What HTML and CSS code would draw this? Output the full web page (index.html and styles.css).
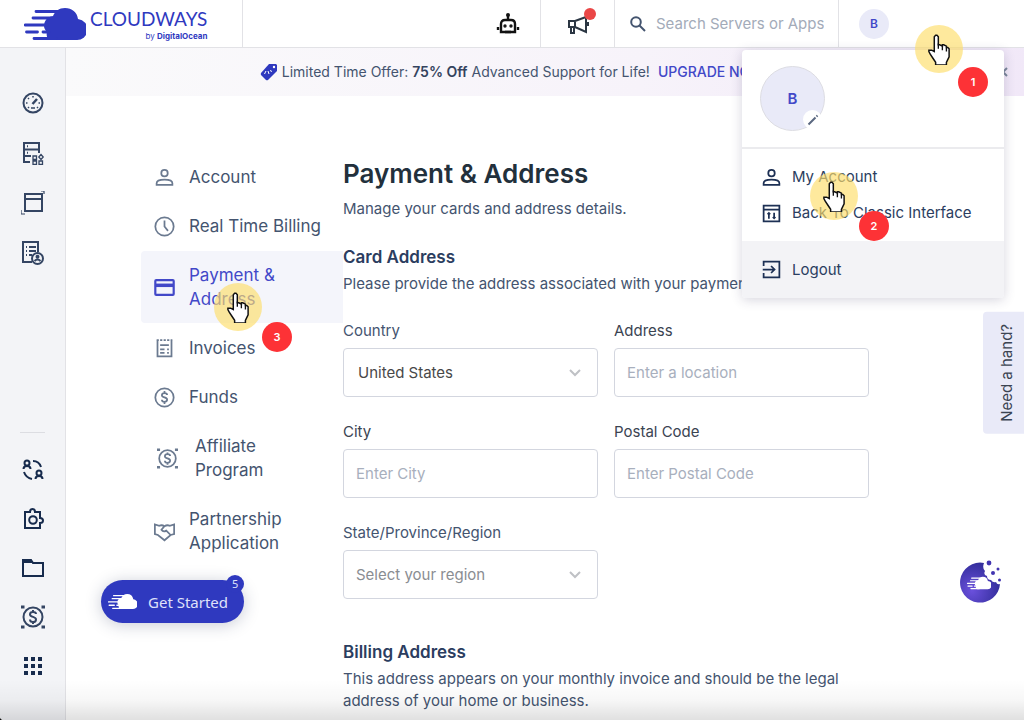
FILE: index.html
```html
<!DOCTYPE html>
<html lang="en">
<head>
  <meta charset="utf-8">
  <title>Payment &amp; Address</title>
  <link rel="stylesheet" href="styles.css">
</head>
<body>
  <!-- shared shapes -->
  <svg class="defs" aria-hidden="true">
    <symbol id="cloud" viewBox="0 0 62 34">
      <path d="M27 33h25a10 10 0 0 0 2-21C53 5 48 1 41 1c-6 0-10 3-12 8-6 1-9 5-9 10 0 2 1 4 3 6-1 3 0 8 4 8z" fill="currentColor"/>
      <path d="M12 4.500h22M9 11h18M1 18h22M2.500 25h11M19 25h6M10 31.500h22" fill="none" stroke="currentColor" stroke-width="2.800" stroke-linecap="round"/>
    </symbol>
    <symbol id="hand" viewBox="0 0 17 23">
      <path d="M5 13V2l1-1h1l1 1v6h1l2 1v-1h1l2 1v1h1l1 1v6l-1 2-1 2v2H6v-2l-2-3-2-3-1-2v-1h2z" fill="#fff" stroke="#111" stroke-width="1.1"/>
      <path d="M8 7v4M11 9v3M14 10v3" fill="none" stroke="#111"/>
    </symbol>
    <symbol id="user" viewBox="0 0 24 24">
      <circle cx="12" cy="7" r="3.700"/>
      <path d="M3 20.500v-2c0-2.500 4-4 9-4s9 1.500 9 4v2z"/>
    </symbol>
    <symbol id="affiliate" viewBox="0 0 24 24">
      <circle cx="12" cy="12" r="9.500"/>
      <path d="M15 9c0-1.500-1.500-2-3-2s-3 .7-3 2.400c0 3.200 6 1.800 6 5 0 1.800-1.500 2.600-3 2.600s-3-.8-3-2.500M12 5v2M12 17v2"/>
      <path d="M0 2h3.500M20.500 2H24M20.500 22H24M0 22h3.500" stroke-width="3"/>
    </symbol>
  </svg>

  <div class="app">
    <header class="topbar">
      <a class="logo" href="#">
        <svg class="logo-cloud"><use href="#cloud"/></svg>
        <span class="logo-text">
          <span class="logo-name">CLOUDWAYS</span>
          <span class="logo-by">by <b>DigitalOcean</b></span>
        </span>
      </a>
      <button class="top-button robot" aria-label="Assistant">
        <svg class="icon" viewBox="0 0 24 24">
          <path d="M12 3v5M5 20v-8q0-4 4-4h6q4 0 4 4v8z" stroke-width="2.400"/>
          <path d="M2 15v3M22 15v3M9 20h6" stroke-width="2.400"/>
          <circle cx="12" cy="3" r="1" fill="currentColor"/>
          <circle cx="9" cy="14" r=".7" fill="currentColor"/>
          <circle cx="15" cy="14" r=".7" fill="currentColor"/>
        </svg>
      </button>
      <button class="top-button news" aria-label="News">
        <svg class="icon" viewBox="0 0 24 24">
          <path d="M3 9v6h6V9zM9 9l11-4v15L9 15M5 15v6h3v-6M22 10v4"/>
        </svg>
        <span class="news-dot"></span>
      </button>
      <label class="search">
        <svg class="search-icon" viewBox="0 0 18 18">
          <circle cx="7" cy="7" r="4.800"/>
          <path d="M10.500 10.500L16 16"/>
        </svg>
        <input type="search" placeholder="Search Servers or Apps" aria-label="Search Servers or Apps">
      </label>
      <div class="profile">
        <button class="avatar">B</button>
      </div>
    </header>

    <div class="body">
      <nav class="sidebar" aria-label="Main">
        <a href="#" aria-label="Dashboard">
          <svg class="icon" viewBox="0 0 24 24">
            <circle cx="12" cy="12" r="9.500"/>
            <path d="M11.500 13L16 8" stroke-width="2.500"/>
            <path d="M12 5v1.500M7 7l1 1M5 12h1.500M7 17l1-1M17.500 12H19M16 16l1 1M10 17h4" stroke-width="1.500"/>
          </svg>
        </a>
        <a href="#" aria-label="Servers">
          <svg class="icon" viewBox="0 0 24 24">
            <path d="M9 21H3V2h15v10M3 8.500h15M3 15h7M6 5.200h1M6 11.700h1"/>
            <path d="M12 15h3.500v3.500H12zM12 20h3.500v3.500H12zM18 20h3.500v3.500H18zM20 13.500l2.200 2.500-2.200 2.500-2.200-2.500z" stroke-width="1.300"/>
          </svg>
        </a>
        <a href="#" aria-label="Applications">
          <svg class="icon" viewBox="0 0 24 24">
            <path d="M4 3h17v17H4zM4 8h17"/>
            <path d="M0 19v4h4M20 0h3v3" stroke-width="1.200"/>
          </svg>
        </a>
        <a href="#" aria-label="Projects">
          <svg class="icon" viewBox="0 0 24 24">
            <path d="M11 21H2V1h15v10M5 6h1M8 6h7M5 10h1M8 10h7M5 14h1M8 14h3"/>
            <circle cx="16.500" cy="17.500" r="5.500"/>
            <circle cx="16.500" cy="15.800" r="1"/>
            <path d="M13.500 20q3-3 6 0"/>
          </svg>
        </a>
        <hr>
        <a class="dark" href="#" aria-label="Team">
          <svg class="icon" viewBox="0 0 24 24">
            <circle cx="6" cy="5" r="2.500"/>
            <path d="M2.500 11q0-3 3.500-3t3.500 3"/>
            <circle cx="18" cy="15" r="2.500"/>
            <path d="M14.500 21q0-3 3.500-3t3.500 3M12 3q6 0 8 6M3 14q2 6 8 7"/>
          </svg>
        </a>
        <a class="dark" href="#" aria-label="Add-ons">
          <svg class="icon" viewBox="0 0 24 24">
            <path d="M4 5h5q0-3 2.500-3T14 5h5v6q3 0 3 2.500T19 16v5H4z"/>
            <circle cx="12" cy="13" r="3.800"/>
          </svg>
        </a>
        <a class="dark" href="#" aria-label="Files">
          <svg class="icon" viewBox="0 0 24 24">
            <path d="M2 4h8l2 3h10v13H2z"/>
            <path d="M2 5.500h9" stroke-width="3"/>
          </svg>
        </a>
        <a href="#" aria-label="Affiliate"><svg class="icon"><use href="#affiliate"/></svg></a>
        <a class="dark" href="#" aria-label="More">
          <svg class="icon solid" viewBox="0 0 24 24">
            <path d="M3 3h4v4H3zM10 3h4v4h-4zM17 3h4v4h-4zM3 10h4v4H3zM10 10h4v4h-4zM17 10h4v4h-4zM3 17h4v4H3zM10 17h4v4h-4zM17 17h4v4h-4z"/>
          </svg>
        </a>
      </nav>

      <div class="page">
        <div class="banner">
          <p>
            <svg class="tag-icon" viewBox="0 0 18 18">
              <path d="M9 1h7l1 1v6l-9 9q-1 .5-2 0l-5-5q-.5-1 0-2z" fill="currentColor"/>
              <circle cx="14" cy="4" r="1.200" fill="#fff"/>
              <path d="M6 8l-1.500 3M8 8l1 3M10.500 7l1 2" stroke="#fff" fill="none"/>
            </svg>
            <span>Limited Time Offer: <b>75% Off</b> Advanced Support for Life!</span>
            <a href="#">UPGRADE NOW</a>
          </p>
          <button class="banner-close" aria-label="Close">
            <svg viewBox="0 0 10 10"><path d="M1 1l8 8M9 1L1 9"/></svg>
          </button>
        </div>

        <main class="main">
          <nav class="subnav" aria-label="Account">
            <a href="#"><svg class="icon"><use href="#user"/></svg><span>Account</span></a>
            <a href="#">
              <svg class="icon" viewBox="0 0 24 24"><circle cx="12" cy="12" r="10.500"/><path d="M12 5v7l4 5"/></svg>
              <span>Real Time Billing</span>
            </a>
            <a class="active" href="#">
              <svg class="icon" viewBox="0 0 24 24"><rect x="1.500" y="3.500" width="21" height="17" rx="1" stroke-width="2.500"/><path d="M2 9.500h20" stroke-width="4"/></svg>
              <span>Payment &amp; Address</span>
            </a>
            <a href="#">
              <svg class="icon" viewBox="0 0 24 24"><path d="M4 3v18h16V3"/><path d="M3 2.500h18" stroke-dasharray="2.500 1.500"/><path d="M7 8h10M7 13h5M15 13h2M7 17h5M15 17h2"/></svg>
              <span>Invoices</span>
            </a>
            <a href="#">
              <svg class="icon" viewBox="0 0 24 24"><circle cx="12" cy="12" r="10.500"/><path d="M15 9c0-1.500-1.500-2-3-2s-3 .7-3 2.400c0 3.200 6 1.800 6 5 0 1.800-1.500 2.600-3 2.600s-3-.8-3-2.500M12 4.500v2.500M12 17v2.500"/></svg>
              <span>Funds</span>
            </a>
            <a class="affiliate" href="#"><svg class="icon"><use href="#affiliate"/></svg><span>Affiliate Program</span></a>
            <a href="#">
              <svg class="icon" viewBox="0 0 24 24"><path d="M12 6q-3-2-6-.5L1 4v11l3.500 1 7.500 6 7-6 4-1V4l-5 1.500Q15 4 12 6l-3.500 4q2 3 5.500 1l5 5"/></svg>
              <span>Partnership Application</span>
            </a>
          </nav>

          <section class="content">
            <h1>Payment &amp; Address</h1>
            <p>Manage your cards and address details.</p>

            <h2>Card Address</h2>
            <p>Please provide the address associated with your payment method.</p>
            <form class="form">
              <div class="field">
                <label for="country">Country</label>
                <div class="select">
                  <select id="country" class="country"><option>United States</option></select>
                  <svg class="chevron" viewBox="0 0 12 8"><path d="M1 1l5 5 5-5"/></svg>
                </div>
              </div>
              <div class="field">
                <label class="black" for="address">Address</label>
                <input id="address" type="text" placeholder="Enter a location">
              </div>
              <div class="field">
                <label class="black" for="city">City</label>
                <input id="city" type="text" placeholder="Enter City">
              </div>
              <div class="field">
                <label class="black" for="postal">Postal Code</label>
                <input id="postal" type="text" placeholder="Enter Postal Code">
              </div>
              <div class="field">
                <label for="region">State/Province/Region</label>
                <div class="select">
                  <select id="region"><option>Select your region</option></select>
                  <svg class="chevron" viewBox="0 0 12 8"><path d="M1 1l5 5 5-5"/></svg>
                </div>
              </div>
            </form>

            <h2>Billing Address</h2>
            <p>This address appears on your monthly invoice and should be the legal address of your home or business.</p>
          </section>
        </main>
      </div>
    </div>

    <!-- profile dropdown -->
    <div class="menu">
      <div class="menu-head">
        <div class="avatar-large">B
          <button class="edit" aria-label="Edit picture">
            <svg viewBox="0 0 12 12"><path d="M1.500 10.500l7-7M9.500 2.500l1-1"/></svg>
          </button>
        </div>
      </div>
      <div class="menu-links">
        <a href="#"><svg class="icon"><use href="#user"/></svg>My Account</a>
        <a href="#">
          <svg class="icon" viewBox="0 0 24 24"><path d="M3 3h18v18H3zM3 7.500h18M9 18v-6M15 11v6M7.500 13L9 11.500l1.500 1.500M13.500 16l1.500 1.500 1.500-1.500"/></svg>
          Back To Classic Interface
        </a>
      </div>
      <a class="logout" href="#">
        <svg class="icon" viewBox="0 0 24 24"><path d="M3 8V3h18v18H3v-5M2 12h13M11.500 8l4 4-4 4"/></svg>
        Logout
      </a>
    </div>

    <button class="help">Need a hand?</button>

    <button class="get-started">
      <svg class="mini-cloud"><use href="#cloud"/></svg>
      Get Started
      <span class="count">5</span>
    </button>

    <button class="chat" aria-label="Chat">
      <svg viewBox="0 0 42 44">
        <defs>
          <radialGradient id="glow" cx=".3" cy=".7" r=".8">
            <stop offset="0" stop-color="#6a50dc"/>
            <stop offset="1" stop-color="#2d2a94"/>
          </radialGradient>
        </defs>
        <path d="M24 3A20 20 0 1 0 40 24q-3 1-4-2-3 1-5-2-4 0-4-4-4-1-2-5-3-3-1-8z" fill="url(#glow)"/>
        <g fill="#4234b0">
          <circle cx="29" cy="3" r="2.400"/><circle cx="38" cy="9" r="1.500"/>
          <circle cx="33" cy="13" r="2"/><circle cx="39.500" cy="20" r="1.500"/>
        </g>
        <use href="#cloud" x="7" y="16" width="24" height="14" color="#fff"/>
      </svg>
    </button>

    <!-- click markers -->
    <div class="click click-1"><svg><use href="#hand"/></svg></div>
    <div class="click click-2"><svg><use href="#hand"/></svg></div>
    <div class="click click-3"><svg><use href="#hand"/></svg></div>
    <div class="step step-1">1</div>
    <div class="step step-2">2</div>
    <div class="step step-3">3</div>

    <div class="fade"></div>
  </div>
</body>
</html>
```
FILE: styles.css
```css
* {
  box-sizing: border-box;
}
html {
  background: #111;
}
body {
  margin: 0;
  font-family: Inter, "Open Sans", sans-serif;
  font-size: 15px;
  line-height: 22px;
  color: #44546f;
}
a {
  color: inherit;
  text-decoration: none;
}
button {
  padding: 0;
  border: 0;
  background: none;
  font: inherit;
  color: inherit;
}
h1, h2, p {
  margin: 0;
}
.defs {
  position: absolute;
  width: 0;
  height: 0;
}
.icon {
  flex: none;
  width: 24px;
  height: 24px;
  fill: none;
  stroke: currentColor;
  stroke-width: 2;
}
.solid {
  fill: currentColor;
  stroke: none;
}
.app {
  position: relative;
  display: flex;
  flex-direction: column;
  height: 100vh;
  overflow: hidden;
  background: #fff;
  border-bottom-left-radius: 4px;
}

/* top bar */
.topbar {
  display: flex;
  flex: none;
  height: 48px;
  border-bottom: 1px solid #e2e2e6;
}
.logo {
  display: flex;
  align-items: center;
  gap: 4px;
  width: 243px;
  padding-left: 24px;
  border-right: 1px solid #e2e2e6;
  color: #2f39bf;
}
.logo-cloud {
  width: 62px;
  height: 34px;
}
.logo-text {
  display: flex;
  flex-direction: column;
  align-items: flex-end;
}
.logo-name {
  font-family: Lato, sans-serif;
  font-size: 19px;
  line-height: 24px;
}
.logo-by {
  font-size: 8px;
  line-height: 10px;
}
.top-button {
  position: relative;
  display: flex;
  align-items: center;
  justify-content: center;
  border-right: 1px solid #e2e2e6;
}
.robot {
  width: 66px;
  margin-left: auto;
  color: #111;
}
.news {
  width: 74px;
  color: #2b3643;
}
.news-dot {
  position: absolute;
  top: 8px;
  right: 18px;
  width: 12px;
  height: 12px;
  border-radius: 50%;
  background: #ea4747;
}
.search {
  display: flex;
  align-items: center;
  gap: 9px;
  width: 224px;
  padding-left: 14px;
  border-right: 1px solid #e2e2e6;
}
.search-icon {
  flex: none;
  width: 18px;
  height: 18px;
  fill: none;
  stroke: #44546f;
  stroke-width: 2;
}
.search input {
  width: 100%;
  min-width: 0;
  padding: 0;
  border: 0;
  font: inherit;
}
.search input::placeholder {
  color: #a3abb9;
}
.profile {
  display: flex;
  align-items: center;
  width: 185px;
  padding-left: 20px;
}
.avatar {
  width: 30px;
  height: 30px;
  border-radius: 50%;
  background: #e9eaf8;
  color: #4248c8;
  font-size: 12px;
  font-weight: 600;
}

/* left sidebar */
.body {
  display: flex;
  flex: 1;
  min-height: 0;
}
.sidebar {
  display: flex;
  flex: none;
  flex-direction: column;
  width: 66px;
  padding: 30px 0;
  background: #f3f4f7;
  border-right: 1px solid #e2e2e6;
  color: #344563;
}
.sidebar a {
  display: flex;
  align-items: center;
  justify-content: center;
  height: 50px;
}
.sidebar hr {
  width: 25px;
  margin: auto auto 12px;
  border: 0;
  border-top: 1px solid #dcdde2;
}
.sidebar hr ~ a {
  height: 49px;
}
.sidebar .dark {
  color: #172b4d;
}

/* offer banner */
.page {
  display: flex;
  flex: 1;
  flex-direction: column;
  min-width: 0;
}
.banner {
  display: flex;
  flex: none;
  align-items: center;
  height: 48px;
  padding-right: 16px;
  background: linear-gradient(100deg, #fafafb, #f7f3fa 60%, #f1e8f8);
}
.banner p {
  display: flex;
  flex: 1;
  align-items: center;
  justify-content: center;
  gap: 4px;
  padding-right: 40px;
  font-size: 14px;
}
.banner b {
  font-weight: 600;
  color: #34435e;
}
.banner a {
  margin-left: 4px;
  color: #4248c8;
  font-weight: 500;
}
.tag-icon {
  width: 18px;
  height: 18px;
  color: #2f39bf;
}
.banner-close {
  width: 10px;
  height: 10px;
  line-height: 10px;
}
.banner-close svg {
  width: 10px;
  height: 10px;
  stroke: #7a8699;
  stroke-width: 2;
}

/* page content */
.main {
  display: flex;
  padding: 57px 155px 0 75px;
}
.subnav {
  display: flex;
  flex: none;
  flex-direction: column;
  gap: 1px;
  width: 202px;
  font-size: 17px;
  line-height: 24px;
}
.subnav a {
  display: flex;
  align-items: center;
  gap: 14px;
  padding: 12px 16px 12px 13px;
}
.subnav .icon {
  width: 21px;
  height: 21px;
  color: #6b7a90;
}
.subnav a.affiliate {
  gap: 17px;
  padding-right: 50px;
  padding-left: 16px;
}
.subnav a.active,
.subnav .active .icon {
  color: #4248c8;
}
.subnav a.active {
  padding-right: 50px;
  background: #f4f5fb;
  border-radius: 4px 0 0 4px;
}
.content {
  flex: 1;
  min-width: 0;
}
h1 {
  margin: 3px 0 6px;
  font-size: 26px;
  font-weight: 600;
  line-height: 36px;
  color: #22303c;
}
h2 {
  margin: 25px 0 4px;
  font-size: 17px;
  font-weight: 600;
  line-height: 24px;
  color: #2b3d60;
}
.form {
  display: grid;
  grid-template-columns: 1fr 1fr;
  gap: 24px 16px;
  margin: 25px 0 41px;
}
.field {
  display: flex;
  flex-direction: column;
  gap: 6px;
  min-width: 0;
}
.black {
  color: #3b4452;
}
.field input,
.field select {
  width: 100%;
  height: 49px;
  padding: 0 12px;
  border: 1px solid #d3d6df;
  border-radius: 4px;
  background: #fff;
  font: inherit;
  color: #8a8d92;
}
.field select {
  appearance: none;
}
.field .country {
  padding-left: 14px;
  color: #484848;
}
.field input::placeholder {
  color: #a8afbd;
}
.select {
  position: relative;
}
.chevron {
  position: absolute;
  top: 21px;
  right: 17px;
  width: 12px;
  height: 8px;
  fill: none;
  stroke: #bfc1c5;
  stroke-width: 2;
}

/* profile dropdown */
.menu {
  position: absolute;
  top: 50px;
  right: 20px;
  width: 262px;
  overflow: hidden;
  border-radius: 4px;
  background: #fff;
  color: #2b3d60;
  box-shadow: 0 2px 12px rgba(50, 45, 90, 0.2);
}
.menu-head {
  padding: 16px 18px;
  border-bottom: 2px solid #ebebee;
}
.avatar-large {
  position: relative;
  display: flex;
  align-items: center;
  justify-content: center;
  width: 65px;
  height: 65px;
  border: 1px solid #dcdce2;
  border-radius: 50%;
  background: #e9eaf8;
  color: #4248c8;
  font-weight: 600;
}
.edit {
  position: absolute;
  right: 2px;
  bottom: 1px;
  display: flex;
  align-items: center;
  justify-content: center;
  width: 19px;
  height: 19px;
  border-radius: 50%;
  background: #fff;
}
.edit svg {
  width: 12px;
  height: 12px;
  stroke: #5b6880;
  stroke-width: 2;
}
.menu a {
  display: flex;
  align-items: center;
  gap: 10px;
  height: 36px;
  padding: 0 19px;
}
.menu .icon {
  width: 21px;
  height: 21px;
  color: #1d3054;
}
.menu-links {
  padding: 10px 0;
}
.menu a.logout {
  height: 57px;
  background: #f3f3f6;
}

/* floating buttons */
.help {
  position: absolute;
  top: 312px;
  right: 0;
  padding: 12px 13px 12px 6px;
  border-radius: 0 4px 4px 0;
  background: #e9eaf8;
  color: #3b4452;
  writing-mode: vertical-rl;
  transform: rotate(180deg);
}
.get-started {
  position: absolute;
  left: 101px;
  bottom: 97px;
  display: flex;
  align-items: center;
  gap: 11px;
  height: 43px;
  padding: 0 16px 0 7px;
  border-radius: 22px;
  background: #2f39bf;
  color: #dfe1fa;
  font-family: "Noto Sans", sans-serif;
  box-shadow: 0 2px 16px rgba(40, 50, 90, 0.25);
}
.mini-cloud {
  width: 29px;
  height: 17px;
  color: #fff;
}
.count {
  position: absolute;
  top: -5px;
  right: 0;
  width: 18px;
  height: 18px;
  border-radius: 50%;
  background: #2f39bf;
  font-size: 11px;
  line-height: 18px;
  text-align: center;
}
.chat {
  position: absolute;
  right: 22px;
  bottom: 116px;
  width: 42px;
  height: 44px;
}

/* click markers */
.click {
  position: absolute;
  display: flex;
  align-items: center;
  justify-content: center;
  width: 48px;
  height: 48px;
  border-radius: 50%;
  background: rgba(253, 221, 105, 0.65);
}
.click svg {
  width: 24px;
  height: 31px;
}
.click-1 {
  top: 25px;
  left: 915px;
}
.click-2 {
  top: 172px;
  left: 810px;
}
.click-3 {
  top: 283px;
  left: 214px;
}
.step {
  position: absolute;
  width: 30px;
  height: 30px;
  border-radius: 50%;
  background: #fd3236;
  color: #fff;
  font-size: 11px;
  font-weight: 600;
  line-height: 30px;
  text-align: center;
}
.step-1 {
  top: 67px;
  left: 958px;
}
.step-2 {
  top: 211px;
  left: 859px;
}
.step-3 {
  top: 322px;
  left: 262px;
}
.fade {
  position: absolute;
  right: 0;
  bottom: 0;
  left: 0;
  height: 40px;
  background: linear-gradient(rgba(0, 0, 0, 0), rgba(0, 0, 0, 0.03) 50%, rgba(0, 0, 0, 0.12));
  pointer-events: none;
}
```
